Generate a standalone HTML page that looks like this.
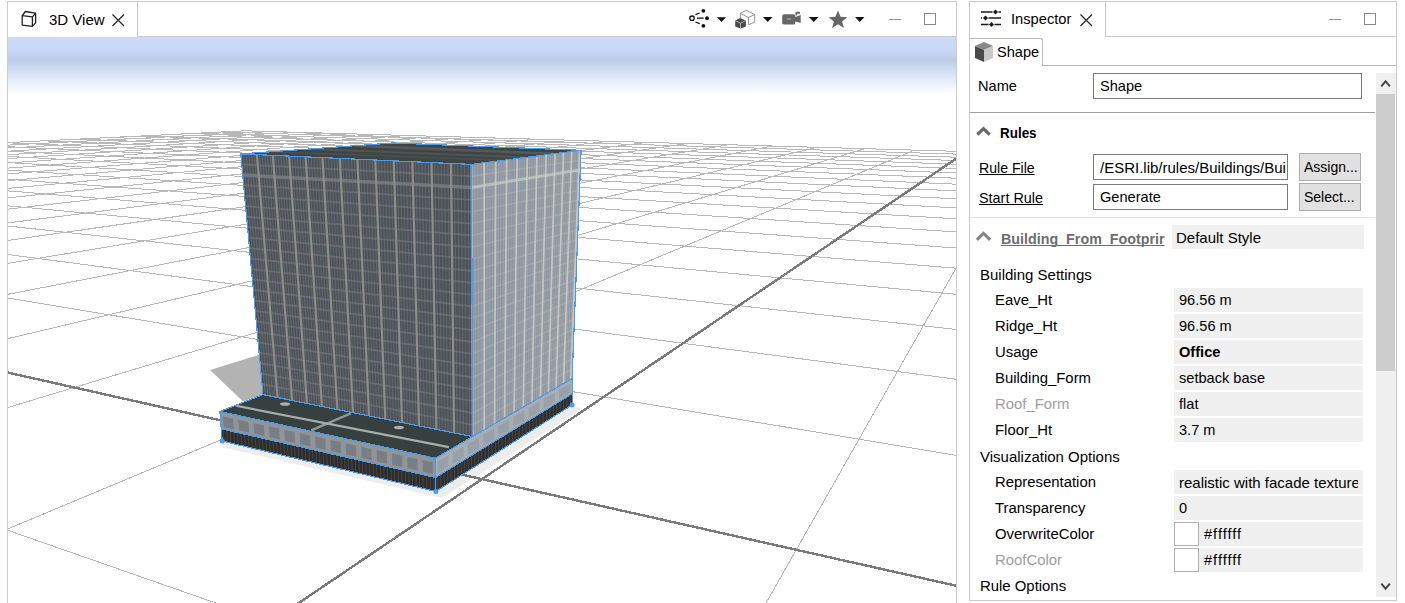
<!DOCTYPE html>
<html><head><meta charset="utf-8">
<style>
html,body{margin:0;padding:0;background:#fff;width:1405px;height:603px;overflow:hidden;}
body{font-family:"Liberation Sans",sans-serif;font-size:14.6px;color:#000;position:relative;}
.a{position:absolute;}
.t{position:absolute;white-space:nowrap;line-height:17px;text-decoration-skip-ink:none;}
.hl{position:absolute;height:1px;background:#cacaca;}
.vl{position:absolute;width:1px;background:#cacaca;}
.box{position:absolute;box-sizing:border-box;}
.val{position:absolute;left:1174px;width:189px;height:24px;background:#f0f0f0;}
.lbl{position:absolute;left:995px;white-space:nowrap;line-height:17px;font-size:14.9px;}
.vt{position:absolute;left:1179px;white-space:nowrap;line-height:17px;}
</style></head><body>
<!-- 3D view panel -->
<div class="vl" style="left:7px;top:1px;height:602px;"></div>
<div class="hl" style="left:7px;top:1px;width:950px;"></div>
<div class="vl" style="left:956px;top:1px;height:602px;"></div>
<div class="vl" style="left:137px;top:1px;height:36px;"></div>
<div class="hl" style="left:137px;top:36px;width:820px;"></div>
<svg class="a" style="left:0;top:0" width="1405" height="603">
<defs>
<linearGradient id="sky" x1="0" y1="0" x2="0" y2="1">
<stop offset="0" stop-color="#ccdbf9"/>
<stop offset="0.224" stop-color="#c9d8f6"/>
<stop offset="0.397" stop-color="#bccbe8"/>
<stop offset="0.569" stop-color="#d0dcf2"/>
<stop offset="0.741" stop-color="#e4ebf8"/>
<stop offset="0.966" stop-color="#fdfdfe"/>
<stop offset="1" stop-color="#ffffff"/>
</linearGradient>
<clipPath id="vc"><rect x="8" y="37" width="948" height="566"/></clipPath>
</defs>
<rect x="8" y="37" width="948" height="58" fill="url(#sky)"/>
<g clip-path="url(#vc)">
<g shape-rendering="crispEdges"><path d="M8.0 142.6L245.2 130.8M8.0 145.1L270.0 131.6M8.0 148.0L295.6 132.3M8.0 151.2L322.1 133.1M8.0 154.7L349.5 133.8M8.0 158.6L377.9 134.7M8.0 163.0L407.3 135.5M8.0 168.1L437.8 136.4M8.0 173.9L469.4 137.3M8.0 180.6L502.2 138.2M8.0 188.4L536.2 139.2M8.0 197.8L571.6 140.2M8.0 209.1L608.5 141.3M8.0 222.9L646.8 142.4M8.0 240.5L686.8 143.6M8.0 263.3L728.4 144.8M8.0 294.3L771.9 146.0M8.0 338.6L817.3 147.3M8.0 407.5L864.8 148.7M8.0 530.4L235.9 610.0M8.0 528.8L914.5 150.1M8.0 298.0L956.0 455.3M762.1 610.0L956.0 268.2M8.0 254.5L956.0 379.2M8.0 226.0L956.0 329.4M8.0 205.8L956.0 294.3M8.0 190.9L956.0 268.2M8.0 179.3L956.0 248.0M8.0 170.1L956.0 231.9M8.0 162.6L956.0 218.8M8.0 156.4L956.0 207.9M8.0 151.2L956.0 198.8M8.0 146.7L956.0 190.9M8.0 142.8L956.0 184.2M42.9 140.8L956.0 178.2M77.8 139.1L956.0 173.0M110.3 137.5L956.0 168.4M140.8 136.0L956.0 164.2M169.3 134.6L956.0 160.5M196.2 133.3L956.0 157.2M221.4 132.0L956.0 154.1M245.2 130.8L956.0 151.3" stroke="#b8b8b8" stroke-width="1" fill="none"/></g>
<path d="M8.0 372.6L956.0 585.7M288.4 610.0L956.0 158.8" stroke="#7b7b7b" stroke-width="2.4" fill="none" shape-rendering="crispEdges"/>
<polygon points="210.1,370.0 259.4,354.6 263.1,394.2 243.0,401.6" fill="#b3b3b3" /><polygon points="222.0,441.0 436.0,491.4 572.0,405.0 582.0,409.0 442.0,498.0 222.0,447.0" fill="#000" opacity="0.07"/><polygon points="240.8,153.9 471.5,164.4 472.7,436.7 263.0,394.6" fill="#4d5259" /><path d="M243.5 154.0L265.4 395.1M246.1 154.1L267.8 395.6M248.8 154.3L270.3 396.1M251.5 154.4L272.7 396.6M254.2 154.5L275.2 397.0M259.5 154.8L280.0 398.0M262.2 154.9L282.4 398.5M264.8 155.0L284.8 399.0M267.5 155.1L287.3 399.5M270.2 155.2L289.7 400.0M275.5 155.5L294.6 400.9M278.2 155.6L297.0 401.4M280.9 155.7L299.5 401.9M283.6 155.8L301.9 402.4M286.3 156.0L304.4 402.9M291.8 156.2L309.4 403.9M294.6 156.3L311.9 404.4M297.3 156.5L314.4 404.9M300.1 156.6L316.9 405.4M302.9 156.7L319.4 405.9M308.4 157.0L324.5 406.9M311.2 157.1L327.0 407.5M314.1 157.2L329.6 408.0M316.9 157.4L332.1 408.5M319.7 157.5L334.7 409.0M325.4 157.8L339.9 410.0M328.3 157.9L342.5 410.6M331.1 158.0L345.1 411.1M334.0 158.1L347.7 411.6M336.9 158.3L350.3 412.1M342.7 158.5L355.6 413.2M345.6 158.7L358.3 413.7M348.5 158.8L360.9 414.3M351.5 158.9L363.6 414.8M354.4 159.1L366.3 415.3M360.3 159.3L371.7 416.4M363.3 159.5L374.4 417.0M366.3 159.6L377.1 417.5M369.3 159.7L379.8 418.1M372.3 159.9L382.5 418.6M378.4 160.2L388.0 419.7M381.4 160.3L390.8 420.3M384.5 160.4L393.6 420.8M387.5 160.6L396.4 421.4M390.6 160.7L399.2 421.9M396.8 161.0L404.8 423.1M399.9 161.1L407.6 423.6M403.0 161.3L410.4 424.2M406.1 161.4L413.3 424.8M409.2 161.6L416.1 425.3M415.6 161.9L421.8 426.5M418.7 162.0L424.7 427.1M421.9 162.1L427.6 427.6M425.1 162.3L430.5 428.2M428.3 162.4L433.4 428.8M434.7 162.7L439.3 430.0M438.0 162.9L442.2 430.6M441.2 163.0L445.2 431.2M444.5 163.2L448.1 431.8M447.8 163.3L451.1 432.4M454.4 163.6L457.2 433.6M457.8 163.8L460.3 434.2M461.2 163.9L463.4 434.8M464.6 164.1L466.5 435.4M468.1 164.2L469.6 436.1" stroke="#6a6e73" stroke-width="1" opacity="0.75"/><path d="M241.8 164.4L471.6 176.2M242.7 174.8L471.6 188.1M243.7 185.3L471.7 199.9M244.7 195.8L471.7 211.8M245.6 206.2L471.8 223.6M246.6 216.7L471.8 235.4M247.6 227.2L471.9 247.3M248.5 237.6L471.9 259.1M249.5 248.1L472.0 271.0M250.5 258.6L472.0 282.8M251.4 269.0L472.1 294.6M252.4 279.5L472.1 306.5M253.3 289.9L472.2 318.3M254.3 300.4L472.2 330.1M255.3 310.9L472.3 342.0M256.2 321.3L472.3 353.8M257.2 331.8L472.4 365.7M258.2 342.3L472.4 377.5M259.1 352.7L472.5 389.3M260.1 363.2L472.5 401.2M261.1 373.7L472.6 413.0M262.0 384.1L472.6 424.9" stroke="#777a7c" stroke-width="1.8" opacity="0.6"/><line x1="242.8" y1="175.1" x2="471.6" y2="187.5" stroke="#767a7d" stroke-width="3.5" opacity="0.9"/><line x1="256.9" y1="154.6" x2="277.6" y2="397.5" stroke="#8e8d87" stroke-width="2.2" opacity="1"/><line x1="272.8" y1="155.4" x2="292.1" y2="400.4" stroke="#8e8d87" stroke-width="2.2" opacity="1"/><line x1="289.1" y1="156.1" x2="306.9" y2="403.4" stroke="#8e8d87" stroke-width="2.2" opacity="1"/><line x1="305.6" y1="156.9" x2="321.9" y2="406.4" stroke="#8e8d87" stroke-width="2.2" opacity="1"/><line x1="322.5" y1="157.6" x2="337.3" y2="409.5" stroke="#8e8d87" stroke-width="2.2" opacity="1"/><line x1="339.8" y1="158.4" x2="353.0" y2="412.7" stroke="#8e8d87" stroke-width="2.2" opacity="1"/><line x1="357.4" y1="159.2" x2="369.0" y2="415.9" stroke="#8e8d87" stroke-width="2.2" opacity="1"/><line x1="375.3" y1="160.0" x2="385.3" y2="419.2" stroke="#8e8d87" stroke-width="2.2" opacity="1"/><line x1="393.7" y1="160.9" x2="402.0" y2="422.5" stroke="#8e8d87" stroke-width="2.2" opacity="1"/><line x1="412.4" y1="161.7" x2="419.0" y2="425.9" stroke="#8e8d87" stroke-width="2.2" opacity="1"/><line x1="431.5" y1="162.6" x2="436.4" y2="429.4" stroke="#8e8d87" stroke-width="2.2" opacity="1"/><line x1="451.0" y1="163.5" x2="454.1" y2="433.0" stroke="#8e8d87" stroke-width="2.2" opacity="1"/><polygon points="471.5,164.4 581.1,150.3 572.1,378.6 472.7,436.7" fill="#8d95a0" /><path d="M474.7 164.0L475.6 435.0M477.9 163.6L478.5 433.3M481.0 163.2L481.3 431.6M487.1 162.4L486.8 428.4M490.0 162.0L489.5 426.9M492.8 161.7L492.1 425.4M498.5 160.9L497.2 422.4M501.2 160.6L499.7 420.9M504.0 160.2L502.2 419.5M509.4 159.5L507.0 416.6M512.0 159.2L509.4 415.2M514.6 158.9L511.8 413.8M519.8 158.2L516.5 411.1M522.3 157.9L518.8 409.8M524.8 157.5L521.0 408.4M529.7 156.9L525.5 405.8M532.1 156.6L527.7 404.6M534.5 156.3L529.9 403.3M539.3 155.7L534.2 400.8M541.6 155.4L536.3 399.6M543.9 155.1L538.3 398.3M548.4 154.5L542.4 395.9M550.6 154.2L544.5 394.8M552.8 153.9L546.5 393.6M557.2 153.4L550.4 391.3M559.3 153.1L552.3 390.2M561.4 152.8L554.2 389.0M565.6 152.3L558.0 386.8M567.6 152.0L559.9 385.7M569.7 151.8L561.7 384.7M573.7 151.3L565.4 382.5M575.6 151.0L567.1 381.5M577.6 150.8L568.9 380.5M579.9 150.5L571.0 379.2M580.3 150.4L571.4 379.0M580.7 150.4L571.7 378.8" stroke="#a8adb3" stroke-width="1" opacity="0.6"/><path d="M471.6 176.2L580.7 160.2M471.6 188.1L580.3 170.2M471.7 199.9L579.9 180.1M471.7 211.8L579.5 190.0M471.8 223.6L579.1 199.9M471.8 235.4L578.8 209.9M471.9 247.3L578.4 219.8M471.9 259.1L578.0 229.7M472.0 271.0L577.6 239.6M472.0 282.8L577.2 249.6M472.1 294.6L576.8 259.5M472.1 306.5L576.4 269.4M472.2 318.3L576.0 279.3M472.2 330.1L575.6 289.3M472.3 342.0L575.2 299.2M472.3 353.8L574.8 309.1M472.4 365.7L574.4 319.0M472.4 377.5L574.1 329.0M472.5 389.3L573.7 338.9M472.5 401.2L573.3 348.8M472.6 413.0L572.9 358.7M472.6 424.9L572.5 368.7" stroke="#b0b4b8" stroke-width="1.5" opacity="0.5"/><line x1="471.6" y1="187.5" x2="580.3" y2="169.7" stroke="#c3c6c4" stroke-width="3" opacity="0.8"/><line x1="484.1" y1="162.8" x2="484.2" y2="430.0" stroke="#d0cfc6" stroke-width="1.8" opacity="0.85"/><line x1="495.7" y1="161.3" x2="494.6" y2="423.9" stroke="#d0cfc6" stroke-width="1.8" opacity="0.85"/><line x1="506.7" y1="159.9" x2="504.6" y2="418.0" stroke="#d0cfc6" stroke-width="1.8" opacity="0.85"/><line x1="517.2" y1="158.5" x2="514.2" y2="412.5" stroke="#d0cfc6" stroke-width="1.8" opacity="0.85"/><line x1="527.3" y1="157.2" x2="523.3" y2="407.1" stroke="#d0cfc6" stroke-width="1.8" opacity="0.85"/><line x1="536.9" y1="156.0" x2="532.0" y2="402.0" stroke="#d0cfc6" stroke-width="1.8" opacity="0.85"/><line x1="546.1" y1="154.8" x2="540.4" y2="397.1" stroke="#d0cfc6" stroke-width="1.8" opacity="0.85"/><line x1="555.0" y1="153.7" x2="548.4" y2="392.4" stroke="#d0cfc6" stroke-width="1.8" opacity="0.85"/><line x1="563.5" y1="152.6" x2="556.1" y2="387.9" stroke="#d0cfc6" stroke-width="1.8" opacity="0.85"/><line x1="571.7" y1="151.5" x2="563.5" y2="383.6" stroke="#d0cfc6" stroke-width="1.8" opacity="0.85"/><line x1="579.5" y1="150.5" x2="570.7" y2="379.4" stroke="#d0cfc6" stroke-width="1.8" opacity="0.85"/><line x1="471.5" y1="164.4" x2="472.7" y2="436.7" stroke="#c0c3c4" stroke-width="2" opacity="0.8"/><polygon points="240.8,153.9 393.0,143.0 581.1,150.3 471.5,164.4" fill="#3e4544" /><line x1="354.9" y1="145.7" x2="553.7" y2="153.8" stroke="#6a706e" stroke-width="2.5" opacity="0.5"/><line x1="309.3" y1="149.0" x2="526.3" y2="157.4" stroke="#5f6563" stroke-width="2" opacity="0.5"/><line x1="271.2" y1="151.7" x2="504.4" y2="160.2" stroke="#5a605e" stroke-width="1.5" opacity="0.45"/><polygon points="219.9,411.5 263.0,394.6 472.7,436.7 435.5,458.2" fill="#36403f" /><line x1="235.7" y1="405.7" x2="448.9" y2="447.2" stroke="#b5b9b8" stroke-width="2.2" opacity="0.9"/><line x1="350.8" y1="413.3" x2="311.2" y2="430.3" stroke="#a9adac" stroke-width="2.5" opacity="0.8"/><ellipse cx="285" cy="404" rx="5" ry="1.8" fill="#c8cccc" opacity="0.8"/><ellipse cx="399" cy="427.5" rx="5" ry="1.8" fill="#c8cccc" opacity="0.8"/><polygon points="219.9,411.5 435.5,458.2 435.5,477.5 221.3,428.9" fill="#8f959b" /><polygon points="221.3,428.9 435.5,477.5 435.9,491.4 222.2,441.1" fill="#2d2d2e" /><polygon points="435.5,458.2 572.1,378.6 572.1,393.8 435.5,477.5" fill="#a7adb3" /><polygon points="435.5,477.5 572.1,393.8 572.1,404.9 435.9,491.4" fill="#2f2f30" /><polygon points="222.8,416.4 233.0,418.7 233.8,429.2 223.7,426.9" fill="#6a7077" opacity="0.6"/><polygon points="238.2,419.8 248.4,422.0 249.1,432.6 239.0,430.3" fill="#6a7077" opacity="0.6"/><polygon points="253.6,423.2 263.8,425.4 264.5,436.1 254.3,433.8" fill="#6a7077" opacity="0.6"/><polygon points="269.0,426.5 279.2,428.8 279.8,439.5 269.6,437.2" fill="#6a7077" opacity="0.6"/><polygon points="284.3,429.9 294.5,432.1 295.1,443.0 284.9,440.7" fill="#6a7077" opacity="0.6"/><polygon points="299.7,433.3 309.9,435.5 310.4,446.4 300.2,444.1" fill="#6a7077" opacity="0.6"/><polygon points="315.1,436.6 325.3,438.9 325.7,449.9 315.6,447.6" fill="#6a7077" opacity="0.6"/><polygon points="330.5,440.0 340.7,442.2 341.0,453.3 330.9,451.0" fill="#6a7077" opacity="0.6"/><polygon points="345.8,443.4 356.0,445.6 356.4,456.8 346.2,454.5" fill="#6a7077" opacity="0.6"/><polygon points="361.2,446.7 371.4,449.0 371.7,460.2 361.5,457.9" fill="#6a7077" opacity="0.6"/><polygon points="376.6,450.1 386.8,452.3 387.0,463.7 376.8,461.4" fill="#6a7077" opacity="0.6"/><polygon points="392.0,453.5 402.2,455.7 402.3,467.1 392.1,464.8" fill="#6a7077" opacity="0.6"/><polygon points="407.3,456.9 417.5,459.1 417.6,470.6 407.4,468.3" fill="#6a7077" opacity="0.6"/><polygon points="422.7,460.2 432.9,462.5 432.9,474.0 422.8,471.7" fill="#6a7077" opacity="0.6"/><polygon points="437.5,461.8 448.6,455.3 448.6,466.6 437.5,473.4" fill="#8a929b" opacity="0.45"/><polygon points="452.7,452.9 463.8,446.3 463.8,457.4 452.7,464.1" fill="#8a929b" opacity="0.45"/><polygon points="467.9,443.9 479.0,437.4 479.0,448.2 467.9,454.9" fill="#8a929b" opacity="0.45"/><polygon points="483.1,434.9 494.2,428.4 494.2,438.9 483.1,445.7" fill="#8a929b" opacity="0.45"/><polygon points="498.3,426.0 509.3,419.4 509.3,429.7 498.3,436.4" fill="#8a929b" opacity="0.45"/><polygon points="513.4,417.0 524.5,410.5 524.5,420.5 513.4,427.2" fill="#8a929b" opacity="0.45"/><polygon points="528.6,408.1 539.7,401.5 539.7,411.2 528.6,418.0" fill="#8a929b" opacity="0.45"/><polygon points="543.8,399.1 554.9,392.6 554.9,402.0 543.8,408.7" fill="#8a929b" opacity="0.45"/><polygon points="559.0,390.1 570.1,383.6 570.1,392.8 559.0,399.5" fill="#8a929b" opacity="0.45"/><line x1="223.1" y1="429.3" x2="224.0" y2="441.5" stroke="#505052" stroke-width="1" opacity="0.7"/><line x1="226.7" y1="430.1" x2="227.5" y2="442.4" stroke="#505052" stroke-width="1" opacity="0.7"/><line x1="230.2" y1="430.9" x2="231.1" y2="443.2" stroke="#505052" stroke-width="1" opacity="0.7"/><line x1="233.8" y1="431.7" x2="234.7" y2="444.0" stroke="#505052" stroke-width="1" opacity="0.7"/><line x1="237.4" y1="432.5" x2="238.2" y2="444.9" stroke="#505052" stroke-width="1" opacity="0.7"/><line x1="240.9" y1="433.4" x2="241.8" y2="445.7" stroke="#505052" stroke-width="1" opacity="0.7"/><line x1="244.5" y1="434.2" x2="245.4" y2="446.5" stroke="#505052" stroke-width="1" opacity="0.7"/><line x1="248.1" y1="435.0" x2="248.9" y2="447.4" stroke="#505052" stroke-width="1" opacity="0.7"/><line x1="251.6" y1="435.8" x2="252.5" y2="448.2" stroke="#505052" stroke-width="1" opacity="0.7"/><line x1="255.2" y1="436.6" x2="256.0" y2="449.1" stroke="#505052" stroke-width="1" opacity="0.7"/><line x1="258.8" y1="437.4" x2="259.6" y2="449.9" stroke="#505052" stroke-width="1" opacity="0.7"/><line x1="262.4" y1="438.2" x2="263.2" y2="450.7" stroke="#505052" stroke-width="1" opacity="0.7"/><line x1="265.9" y1="439.0" x2="266.7" y2="451.6" stroke="#505052" stroke-width="1" opacity="0.7"/><line x1="269.5" y1="439.8" x2="270.3" y2="452.4" stroke="#505052" stroke-width="1" opacity="0.7"/><line x1="273.1" y1="440.6" x2="273.8" y2="453.3" stroke="#505052" stroke-width="1" opacity="0.7"/><line x1="276.6" y1="441.5" x2="277.4" y2="454.1" stroke="#505052" stroke-width="1" opacity="0.7"/><line x1="280.2" y1="442.3" x2="281.0" y2="454.9" stroke="#505052" stroke-width="1" opacity="0.7"/><line x1="283.8" y1="443.1" x2="284.5" y2="455.8" stroke="#505052" stroke-width="1" opacity="0.7"/><line x1="287.3" y1="443.9" x2="288.1" y2="456.6" stroke="#505052" stroke-width="1" opacity="0.7"/><line x1="290.9" y1="444.7" x2="291.7" y2="457.4" stroke="#505052" stroke-width="1" opacity="0.7"/><line x1="294.5" y1="445.5" x2="295.2" y2="458.3" stroke="#505052" stroke-width="1" opacity="0.7"/><line x1="298.1" y1="446.3" x2="298.8" y2="459.1" stroke="#505052" stroke-width="1" opacity="0.7"/><line x1="301.6" y1="447.1" x2="302.3" y2="460.0" stroke="#505052" stroke-width="1" opacity="0.7"/><line x1="305.2" y1="447.9" x2="305.9" y2="460.8" stroke="#505052" stroke-width="1" opacity="0.7"/><line x1="308.8" y1="448.7" x2="309.5" y2="461.6" stroke="#505052" stroke-width="1" opacity="0.7"/><line x1="312.3" y1="449.6" x2="313.0" y2="462.5" stroke="#505052" stroke-width="1" opacity="0.7"/><line x1="315.9" y1="450.4" x2="316.6" y2="463.3" stroke="#505052" stroke-width="1" opacity="0.7"/><line x1="319.5" y1="451.2" x2="320.1" y2="464.2" stroke="#505052" stroke-width="1" opacity="0.7"/><line x1="323.0" y1="452.0" x2="323.7" y2="465.0" stroke="#505052" stroke-width="1" opacity="0.7"/><line x1="326.6" y1="452.8" x2="327.3" y2="465.8" stroke="#505052" stroke-width="1" opacity="0.7"/><line x1="330.2" y1="453.6" x2="330.8" y2="466.7" stroke="#505052" stroke-width="1" opacity="0.7"/><line x1="333.8" y1="454.4" x2="334.4" y2="467.5" stroke="#505052" stroke-width="1" opacity="0.7"/><line x1="337.3" y1="455.2" x2="338.0" y2="468.3" stroke="#505052" stroke-width="1" opacity="0.7"/><line x1="340.9" y1="456.0" x2="341.5" y2="469.2" stroke="#505052" stroke-width="1" opacity="0.7"/><line x1="344.5" y1="456.8" x2="345.1" y2="470.0" stroke="#505052" stroke-width="1" opacity="0.7"/><line x1="348.0" y1="457.7" x2="348.6" y2="470.9" stroke="#505052" stroke-width="1" opacity="0.7"/><line x1="351.6" y1="458.5" x2="352.2" y2="471.7" stroke="#505052" stroke-width="1" opacity="0.7"/><line x1="355.2" y1="459.3" x2="355.8" y2="472.5" stroke="#505052" stroke-width="1" opacity="0.7"/><line x1="358.7" y1="460.1" x2="359.3" y2="473.4" stroke="#505052" stroke-width="1" opacity="0.7"/><line x1="362.3" y1="460.9" x2="362.9" y2="474.2" stroke="#505052" stroke-width="1" opacity="0.7"/><line x1="365.9" y1="461.7" x2="366.4" y2="475.1" stroke="#505052" stroke-width="1" opacity="0.7"/><line x1="369.5" y1="462.5" x2="370.0" y2="475.9" stroke="#505052" stroke-width="1" opacity="0.7"/><line x1="373.0" y1="463.3" x2="373.6" y2="476.7" stroke="#505052" stroke-width="1" opacity="0.7"/><line x1="376.6" y1="464.1" x2="377.1" y2="477.6" stroke="#505052" stroke-width="1" opacity="0.7"/><line x1="380.2" y1="464.9" x2="380.7" y2="478.4" stroke="#505052" stroke-width="1" opacity="0.7"/><line x1="383.7" y1="465.8" x2="384.3" y2="479.2" stroke="#505052" stroke-width="1" opacity="0.7"/><line x1="387.3" y1="466.6" x2="387.8" y2="480.1" stroke="#505052" stroke-width="1" opacity="0.7"/><line x1="390.9" y1="467.4" x2="391.4" y2="480.9" stroke="#505052" stroke-width="1" opacity="0.7"/><line x1="394.4" y1="468.2" x2="394.9" y2="481.8" stroke="#505052" stroke-width="1" opacity="0.7"/><line x1="398.0" y1="469.0" x2="398.5" y2="482.6" stroke="#505052" stroke-width="1" opacity="0.7"/><line x1="401.6" y1="469.8" x2="402.1" y2="483.4" stroke="#505052" stroke-width="1" opacity="0.7"/><line x1="405.2" y1="470.6" x2="405.6" y2="484.3" stroke="#505052" stroke-width="1" opacity="0.7"/><line x1="408.7" y1="471.4" x2="409.2" y2="485.1" stroke="#505052" stroke-width="1" opacity="0.7"/><line x1="412.3" y1="472.2" x2="412.7" y2="486.0" stroke="#505052" stroke-width="1" opacity="0.7"/><line x1="415.9" y1="473.0" x2="416.3" y2="486.8" stroke="#505052" stroke-width="1" opacity="0.7"/><line x1="419.4" y1="473.9" x2="419.9" y2="487.6" stroke="#505052" stroke-width="1" opacity="0.7"/><line x1="423.0" y1="474.7" x2="423.4" y2="488.5" stroke="#505052" stroke-width="1" opacity="0.7"/><line x1="426.6" y1="475.5" x2="427.0" y2="489.3" stroke="#505052" stroke-width="1" opacity="0.7"/><line x1="430.1" y1="476.3" x2="430.6" y2="490.1" stroke="#505052" stroke-width="1" opacity="0.7"/><line x1="433.7" y1="477.1" x2="434.1" y2="491.0" stroke="#505052" stroke-width="1" opacity="0.7"/><line x1="437.2" y1="476.5" x2="437.6" y2="490.3" stroke="#525254" stroke-width="1" opacity="0.7"/><line x1="440.6" y1="474.4" x2="441.0" y2="488.2" stroke="#525254" stroke-width="1" opacity="0.7"/><line x1="444.0" y1="472.3" x2="444.4" y2="486.0" stroke="#525254" stroke-width="1" opacity="0.7"/><line x1="447.5" y1="470.2" x2="447.8" y2="483.8" stroke="#525254" stroke-width="1" opacity="0.7"/><line x1="450.9" y1="468.1" x2="451.2" y2="481.7" stroke="#525254" stroke-width="1" opacity="0.7"/><line x1="454.3" y1="466.0" x2="454.6" y2="479.5" stroke="#525254" stroke-width="1" opacity="0.7"/><line x1="457.7" y1="463.9" x2="458.0" y2="477.3" stroke="#525254" stroke-width="1" opacity="0.7"/><line x1="461.1" y1="461.8" x2="461.4" y2="475.2" stroke="#525254" stroke-width="1" opacity="0.7"/><line x1="464.5" y1="459.7" x2="464.8" y2="473.0" stroke="#525254" stroke-width="1" opacity="0.7"/><line x1="467.9" y1="457.6" x2="468.2" y2="470.9" stroke="#525254" stroke-width="1" opacity="0.7"/><line x1="471.4" y1="455.5" x2="471.7" y2="468.7" stroke="#525254" stroke-width="1" opacity="0.7"/><line x1="474.8" y1="453.4" x2="475.1" y2="466.5" stroke="#525254" stroke-width="1" opacity="0.7"/><line x1="478.2" y1="451.3" x2="478.5" y2="464.4" stroke="#525254" stroke-width="1" opacity="0.7"/><line x1="481.6" y1="449.3" x2="481.9" y2="462.2" stroke="#525254" stroke-width="1" opacity="0.7"/><line x1="485.0" y1="447.2" x2="485.3" y2="460.0" stroke="#525254" stroke-width="1" opacity="0.7"/><line x1="488.4" y1="445.1" x2="488.7" y2="457.9" stroke="#525254" stroke-width="1" opacity="0.7"/><line x1="491.8" y1="443.0" x2="492.1" y2="455.7" stroke="#525254" stroke-width="1" opacity="0.7"/><line x1="495.3" y1="440.9" x2="495.5" y2="453.6" stroke="#525254" stroke-width="1" opacity="0.7"/><line x1="498.7" y1="438.8" x2="498.9" y2="451.4" stroke="#525254" stroke-width="1" opacity="0.7"/><line x1="502.1" y1="436.7" x2="502.3" y2="449.2" stroke="#525254" stroke-width="1" opacity="0.7"/><line x1="505.5" y1="434.6" x2="505.7" y2="447.1" stroke="#525254" stroke-width="1" opacity="0.7"/><line x1="508.9" y1="432.5" x2="509.1" y2="444.9" stroke="#525254" stroke-width="1" opacity="0.7"/><line x1="512.3" y1="430.4" x2="512.5" y2="442.7" stroke="#525254" stroke-width="1" opacity="0.7"/><line x1="515.8" y1="428.3" x2="515.9" y2="440.6" stroke="#525254" stroke-width="1" opacity="0.7"/><line x1="519.2" y1="426.2" x2="519.3" y2="438.4" stroke="#525254" stroke-width="1" opacity="0.7"/><line x1="522.6" y1="424.1" x2="522.7" y2="436.3" stroke="#525254" stroke-width="1" opacity="0.7"/><line x1="526.0" y1="422.0" x2="526.1" y2="434.1" stroke="#525254" stroke-width="1" opacity="0.7"/><line x1="529.4" y1="420.0" x2="529.5" y2="431.9" stroke="#525254" stroke-width="1" opacity="0.7"/><line x1="532.8" y1="417.9" x2="532.9" y2="429.8" stroke="#525254" stroke-width="1" opacity="0.7"/><line x1="536.2" y1="415.8" x2="536.3" y2="427.6" stroke="#525254" stroke-width="1" opacity="0.7"/><line x1="539.7" y1="413.7" x2="539.8" y2="425.4" stroke="#525254" stroke-width="1" opacity="0.7"/><line x1="543.1" y1="411.6" x2="543.2" y2="423.3" stroke="#525254" stroke-width="1" opacity="0.7"/><line x1="546.5" y1="409.5" x2="546.6" y2="421.1" stroke="#525254" stroke-width="1" opacity="0.7"/><line x1="549.9" y1="407.4" x2="550.0" y2="419.0" stroke="#525254" stroke-width="1" opacity="0.7"/><line x1="553.3" y1="405.3" x2="553.4" y2="416.8" stroke="#525254" stroke-width="1" opacity="0.7"/><line x1="556.7" y1="403.2" x2="556.8" y2="414.6" stroke="#525254" stroke-width="1" opacity="0.7"/><line x1="560.1" y1="401.1" x2="560.2" y2="412.5" stroke="#525254" stroke-width="1" opacity="0.7"/><line x1="563.6" y1="399.0" x2="563.6" y2="410.3" stroke="#525254" stroke-width="1" opacity="0.7"/><line x1="567.0" y1="396.9" x2="567.0" y2="408.1" stroke="#525254" stroke-width="1" opacity="0.7"/><line x1="570.4" y1="394.8" x2="570.4" y2="406.0" stroke="#525254" stroke-width="1" opacity="0.7"/><polyline points="263.0,394.6 240.8,153.9 393.0,143.0 581.1,150.3 572.1,378.6" fill="none" stroke="#4a9bea" stroke-width="1.2" shape-rendering="crispEdges"/><polyline points="240.8,153.9 471.5,164.4 581.1,150.3" fill="none" stroke="#4a9bea" stroke-width="1.2" shape-rendering="crispEdges"/><polyline points="471.5,164.4 472.7,436.7" fill="none" stroke="#4a9bea" stroke-width="1.2" shape-rendering="crispEdges"/><polyline points="263.0,394.6 219.9,411.5 222.2,441.1 435.9,491.4 572.1,404.9 572.1,378.6" fill="none" stroke="#4a9bea" stroke-width="1.2" shape-rendering="crispEdges"/><polyline points="263.0,394.6 472.7,436.7" fill="none" stroke="#4a9bea" stroke-width="1.2" shape-rendering="crispEdges"/><polyline points="219.9,411.5 435.5,458.2 572.1,378.6" fill="none" stroke="#4a9bea" stroke-width="1.2" shape-rendering="crispEdges"/><polyline points="221.3,428.9 435.5,477.5 572.1,393.8" fill="none" stroke="#4a9bea" stroke-width="1.2" shape-rendering="crispEdges"/><polyline points="435.5,458.2 435.9,491.4" fill="none" stroke="#4a9bea" stroke-width="1.2" shape-rendering="crispEdges"/><circle cx="222.2" cy="441.1" r="2.5" fill="#4a9bea"/><circle cx="435.9" cy="491.4" r="2.5" fill="#4a9bea"/><circle cx="572.1" cy="404.9" r="2.5" fill="#4a9bea"/>
</g>
<!-- 3D view tab icon: cube outline -->
<g fill="none" stroke="#222" stroke-width="1.3" stroke-linejoin="round">
<path d="M22.2 15.7 L25.4 11.5 L35.6 13.2 L35.6 22.9 L32.4 26.4 L22.2 25.1 Z"/>
<path d="M22.2 15.7 L32.4 16.9 L35.6 13.2 M32.4 16.9 L32.4 26.4"/>
</g>
<path d="M112.5 14.5 L124 26 M124 14.5 L112.5 26" stroke="#222" stroke-width="1.2"/>
<!-- toolbar icons -->
<g>
<circle cx="692" cy="18.2" r="2.2" fill="none" stroke="#111" stroke-width="1.3"/>
<circle cx="703.4" cy="10.8" r="1.9" fill="#111"/>
<circle cx="707" cy="18.2" r="1.9" fill="#111"/>
<circle cx="703.4" cy="25.8" r="1.9" fill="#111"/>
<path d="M695.4 14.6 L699.7 13 M697 18.2 L703.7 18.2 M695.4 22 L699.7 23.6" stroke="#111" stroke-width="1.2"/>
<path d="M717 17.2 L726.1 17.2 L721.5 22 Z" fill="#111"/>
<g fill="none" stroke="#8a8a8a" stroke-width="0.9">
<path d="M740.3 13.3 L746.4 10.3 L754.7 14.6 L754.7 22.1 L748.5 24.8 M740.3 13.3 L740.3 18 M740.3 13.3 L748.5 17.5 L754.7 14.6 M748.5 17.5 L748.5 24.8"/>
</g>
<path d="M735.2 20.5 L740 18.1 L745.9 20.5 L745.9 26.4 L740.5 28.6 L735.2 26.4 Z" fill="#4a4a4a"/>
<path d="M735.2 20.5 L740.5 23.2 L745.9 20.5 M740.5 23.2 L740.5 28.6" stroke="#c8c8c8" fill="none" stroke-width="0.8"/>
<path d="M763 17 L772.5 17 L767.75 22 Z" fill="#111"/>
<path d="M782.2 16 Q782.2 14.2 784.5 14.2 L793.5 14.2 Q795.3 14.2 795.3 16 L795.3 17 L800.7 15 L800.7 23 L795.3 21.5 L795.3 23 Q795.3 24.6 793.5 24.6 L784.5 24.6 Q782.2 24.6 782.2 23 Z" fill="#666"/>
<path d="M795.5 11.8 L799.5 11.8 Q800 11.8 800 12.8 L800 13.8 L797.5 13.8 L796.5 15.5 L795.5 15.5 Z" fill="#666"/>
<path d="M786.5 19 L791.2 19" stroke="#9a9a9a" stroke-width="1.6"/>
<path d="M809 17 L818.5 17 L813.75 22 Z" fill="#111"/>
<path d="M838 10.5 L840.6 16.8 L847.3 17.2 L842.1 21.4 L843.9 27.9 L838 24.2 L832.1 27.9 L833.9 21.4 L828.7 17.2 L835.4 16.8 Z" fill="#666"/>
<path d="M855 17 L864.5 17 L859.75 22 Z" fill="#111"/>
<path d="M889 19.5 L901 19.5" stroke="#999" stroke-width="1"/>
<rect x="924.5" y="13.5" width="11" height="11" fill="none" stroke="#888" stroke-width="1"/>
</g>
<!-- inspector tab icon: sliders -->
<g stroke="#1a1a1a" stroke-width="1.6">
<path d="M981 12 L992.5 12 M998.5 12 L1001 12 M981 18 L982 18 M988.5 18 L1001 18 M981 24.5 L988.5 24.5 M994.5 24.5 L1001 24.5"/>
</g>
<g fill="#1a1a1a"><path d="M995.5 9.5 L998 12 L995.5 14.5 L993 12 Z"/><path d="M985.5 15.5 L988 18 L985.5 20.5 L983 18 Z"/><path d="M991.5 22 L994 24.5 L991.5 27 L989 24.5 Z"/></g>
<path d="M1080.5 14.5 L1092 26 M1092 14.5 L1080.5 26" stroke="#222" stroke-width="1.2"/>
<path d="M1329 19.5 L1341 19.5" stroke="#999" stroke-width="1"/>
<rect x="1364.5" y="13.5" width="11" height="11" fill="none" stroke="#888" stroke-width="1"/>
<!-- shape icon: shaded cube -->
<path d="M975 46 L984 42 L993 46 L984 50 Z" fill="#888"/>
<path d="M975 46 L984 50 L984 62 L975 58 Z" fill="#4a4a4a"/>
<path d="M993 46 L984 50 L984 62 L993 58 Z" fill="#c8c8c8"/>
<!-- chevrons -->
<path d="M977.4 134.6 L983.5 128.6 L989.6 134.6" stroke="#666" stroke-width="3" fill="none"/>
<path d="M976.9 239.9 L983.5 233.3 L990.1 239.9" stroke="#848484" stroke-width="3" fill="none"/>
</svg>
<div class="t" style="left:49px;top:11px;font-size:15px;">3D View</div>

<!-- Inspector panel -->
<div class="vl" style="left:969px;top:1px;height:600px;"></div>
<div class="hl" style="left:969px;top:1px;width:428px;"></div>
<div class="vl" style="left:1396px;top:1px;height:600px;"></div>
<div class="hl" style="left:969px;top:600px;width:428px;"></div>
<div class="vl" style="left:1105px;top:1px;height:36px;"></div>
<div class="hl" style="left:1105px;top:36px;width:291px;"></div>
<div class="t" style="left:1011px;top:11px;font-size:14.7px;">Inspector</div>
<!-- Shape tab -->
<div class="box" style="left:969px;top:38px;width:74px;height:28px;border-top:1px solid #b9b9b9;border-right:1px solid #b9b9b9;border-top-right-radius:3px;"></div>
<div class="hl" style="left:1042px;top:65px;width:354px;background:#b9b9b9;"></div>
<div class="t" style="left:997px;top:44px;">Shape</div>

<div class="t" style="left:978px;top:78px;">Name</div>
<div class="box" style="left:1093px;top:73px;width:269px;height:26px;border:1px solid #7a7a7a;"></div>
<div class="t" style="left:1100px;top:78px;">Shape</div>
<!-- scrollbar -->
<div class="a" style="left:1376px;top:73px;width:20px;height:524px;background:#f0f0f0;"></div>
<div class="a" style="left:1376px;top:94px;width:19px;height:277px;background:#cdcdcd;"></div>

<div class="hl" style="left:970px;top:112px;width:405px;background:#a0a0a0;"></div>
<div class="t" style="left:1000px;top:125px;font-weight:bold;font-size:14.6px;transform:scaleX(0.92);transform-origin:0 0;">Rules</div>
<div class="t" style="left:979px;top:160px;text-decoration:underline;font-size:14.1px;">Rule File</div>
<div class="t" style="left:979px;top:190px;text-decoration:underline;font-size:14.4px;">Start Rule</div>
<div class="box" style="left:1093px;top:154px;width:195px;height:26px;border:1px solid #7a7a7a;overflow:hidden;"></div>
<div class="t" style="left:1100px;top:159px;width:186px;overflow:hidden;font-size:15px;">/ESRI.lib/rules/Buildings/Building_From_Footprint.cga</div>
<div class="box" style="left:1093px;top:184px;width:195px;height:26px;border:1px solid #7a7a7a;"></div>
<div class="t" style="left:1100px;top:189px;">Generate</div>
<div class="box" style="left:1299px;top:153px;width:62px;height:28px;border:1px solid #adadad;background:#e1e1e1;"></div>
<div class="t" style="left:1304px;top:159px;font-size:14px;">Assign...</div>
<div class="box" style="left:1299px;top:183px;width:62px;height:28px;border:1px solid #adadad;background:#e1e1e1;"></div>
<div class="t" style="left:1304px;top:189px;font-size:14px;">Select...</div>
<div class="hl" style="left:970px;top:217px;width:405px;background:#e3e3e3;"></div>

<div class="t" style="left:1001px;top:231px;font-weight:bold;font-size:14.3px;color:#6d6d6d;text-decoration:underline;">Building_From_Footprir</div>
<div class="a" style="left:1172px;top:225px;width:192px;height:24px;background:#f0f0f0;"></div>
<div class="t" style="left:1176px;top:229px;font-size:15px;">Default Style</div>

<div class="t" style="left:980px;top:266px;font-size:15px;">Building Settings</div>
<div class="val" style="top:288px;"></div><div class="lbl" style="top:292px;">Eave_Ht</div><div class="vt" style="top:292px;">96.56 m</div>
<div class="val" style="top:314px;"></div><div class="lbl" style="top:318px;">Ridge_Ht</div><div class="vt" style="top:318px;">96.56 m</div>
<div class="val" style="top:340px;"></div><div class="lbl" style="top:344px;">Usage</div><div class="vt" style="top:344px;font-weight:bold;">Office</div>
<div class="val" style="top:366px;"></div><div class="lbl" style="top:370px;">Building_Form</div><div class="vt" style="top:370px;">setback base</div>
<div class="val" style="top:392px;"></div><div class="lbl" style="top:396px;color:#a0a0a0;">Roof_Form</div><div class="vt" style="top:396px;">flat</div>
<div class="val" style="top:418px;"></div><div class="lbl" style="top:422px;">Floor_Ht</div><div class="vt" style="top:422px;">3.7 m</div>
<div class="t" style="left:980px;top:448px;font-size:15px;">Visualization Options</div>
<div class="val" style="top:470px;"></div><div class="lbl" style="top:474px;">Representation</div><div class="vt" style="top:474px;width:179px;overflow:hidden;font-size:15px;">realistic with facade textures</div>
<div class="val" style="top:496px;"></div><div class="lbl" style="top:500px;">Transparency</div><div class="vt" style="top:500px;">0</div>
<div class="val" style="top:522px;"></div><div class="lbl" style="top:526px;">OverwriteColor</div>
<div class="box" style="left:1174px;top:522px;width:25px;height:24px;border:1px solid #b0b0b0;background:#fff;"></div><div class="t" style="left:1204px;top:526px;letter-spacing:1px;">#ffffff</div>
<div class="val" style="top:548px;"></div><div class="lbl" style="top:552px;color:#a0a0a0;">RoofColor</div>
<div class="box" style="left:1174px;top:548px;width:25px;height:24px;border:1px solid #b0b0b0;background:#fff;"></div><div class="t" style="left:1204px;top:552px;letter-spacing:1px;">#ffffff</div>
<div class="t" style="left:980px;top:578px;font-size:14.9px;">Rule Options</div>
<svg class="a" style="left:0;top:0" width="1405" height="603">
<path d="M1381.3 86.4 L1385.6 81.2 L1389.9 86.4" stroke="#444" stroke-width="2" fill="none"/>
<path d="M1381.3 583.6 L1385.6 588.6 L1389.9 583.6" stroke="#444" stroke-width="2" fill="none"/>
</svg>
</body></html>
